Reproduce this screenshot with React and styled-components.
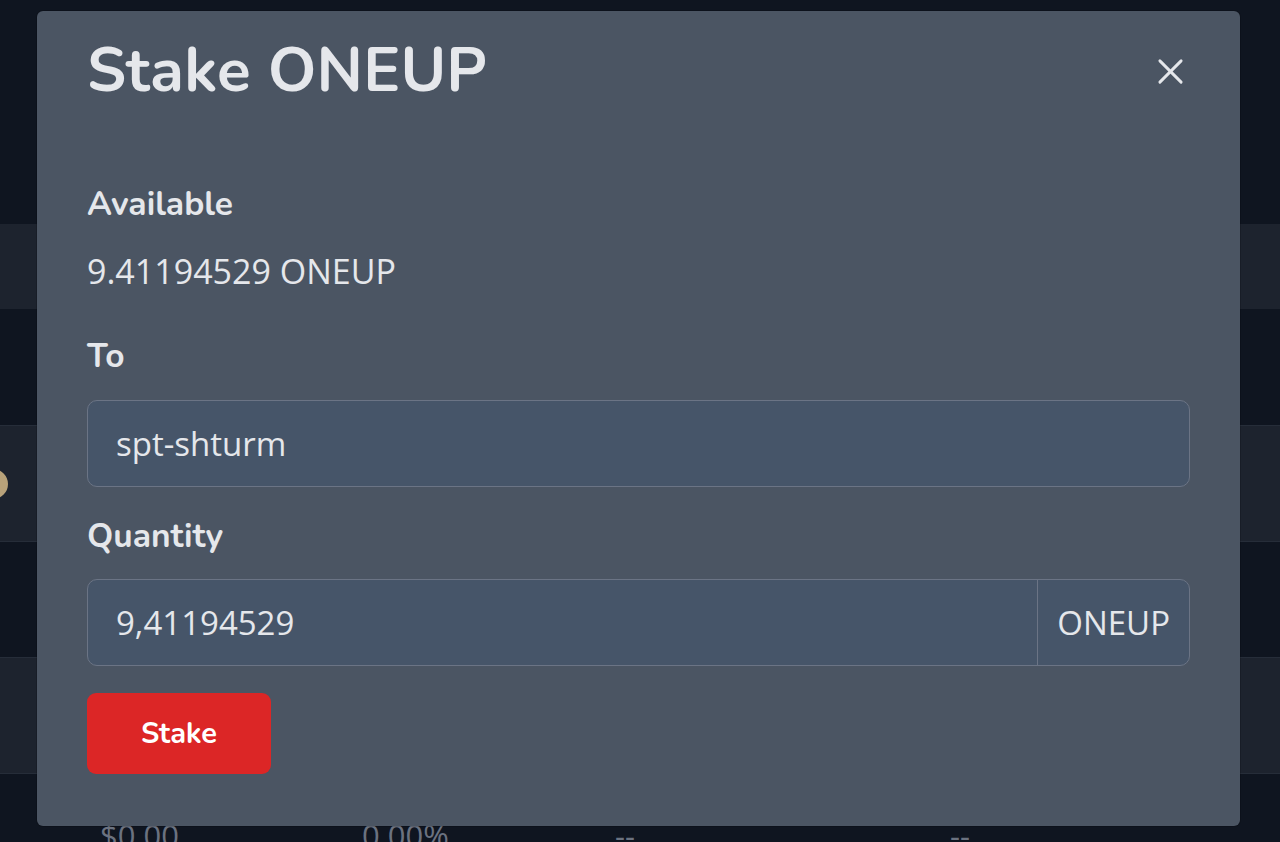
import React from 'react';
import styled, { createGlobalStyle } from 'styled-components';

const GlobalStyle = createGlobalStyle`
  html, body {
    margin: 0;
    padding: 0;
    background: #0f1520;
    overflow: hidden;
  }
  * {
    box-sizing: border-box;
  }
`;

const Page = styled.div`
  position: relative;
  width: 1280px;
  height: 842px;
  overflow: hidden;
  background: #0f1520;
  font-family: 'Open Sans', 'Liberation Sans', sans-serif;
`;

const TopArea = styled.div`
  height: 224px;
  background: #0f1520;
`;

const TableRow = styled.div`
  display: flex;
  align-items: ${(p) => (p.$top ? 'flex-start' : 'flex-end')};
  height: ${(p) => p.$height || 116}px;
  padding-top: ${(p) => p.$padTop || 0}px;
  background: ${(p) => (p.$light ? '#1d232e' : '#0f1520')};
  border-top: 1px solid ${(p) => (p.$line ? '#262d39' : 'transparent')};
`;

const Cell = styled.div`
  width: ${(p) => p.$width}px;
  padding-left: ${(p) => p.$pad || 0}px;
  color: #6b7280;
  font-size: 31px;
  line-height: 1;
  white-space: nowrap;
`;

const Avatar = styled.div`
  width: 30px;
  height: 30px;
  margin-left: -22px;
  margin-bottom: 42px;
  border-radius: 50%;
  background: #b8a27a;
`;

const Overlay = styled.div`
  position: absolute;
  inset: 0;
  padding: 11px 40px 0 37px;
`;

const Modal = styled.div`
  width: 1203px;
  height: 815px;
  background: #4b5563;
  border-radius: 6px;
  box-shadow: 0 0 0 1px rgba(0, 0, 0, 0.15);
  padding: 30px 50px 0 50px;
  display: flex;
  flex-direction: column;
`;

const Header = styled.div`
  display: flex;
  align-items: center;
  justify-content: space-between;
  height: 60px;
  margin-bottom: 84px;
`;

const Title = styled.h1`
  margin: 0;
  font-family: 'Nunito', 'Lato', sans-serif;
  font-weight: 700;
  font-size: 62px;
  line-height: 1;
  color: #e5e7eb;
  letter-spacing: 0.2px;
`;

const CloseButton = styled.button`
  display: flex;
  align-items: center;
  justify-content: center;
  width: 40px;
  height: 40px;
  padding: 0;
  border: none;
  background: transparent;
  color: #e5e7eb;
  cursor: pointer;
`;

const Label = styled.div`
  font-family: 'Nunito', 'Lato', sans-serif;
  font-weight: 700;
  font-size: 33.5px;
  line-height: 38px;
  color: #e5e7eb;
  margin-bottom: ${(p) => p.$gap || 0}px;
`;

const Value = styled.div`
  font-size: 34px;
  line-height: 38px;
  color: #e5e7eb;
  margin-bottom: 47px;
`;

const InputGroup = styled.div`
  display: flex;
  height: 87px;
  border: 1px solid #6b7485;
  border-radius: 10px;
  background: #465569;
  overflow: hidden;
  margin-bottom: ${(p) => p.$gap || 0}px;
`;

const Input = styled.input`
  flex: 1;
  min-width: 0;
  border: none;
  outline: none;
  background: transparent;
  padding: 0 28px;
  font-family: 'Open Sans', 'Liberation Sans', sans-serif;
  font-size: 33px;
  color: #e5e7eb;
`;

const Addon = styled.div`
  display: flex;
  align-items: center;
  padding: 0 19px;
  border-left: 1px solid #6b7485;
  font-size: 33px;
  color: #e5e7eb;
`;

const StakeButton = styled.button`
  width: 184px;
  height: 81px;
  border: none;
  border-radius: 9px;
  background: #dc2626;
  color: #ffffff;
  font-family: 'Nunito', 'Lato', sans-serif;
  font-weight: 700;
  font-size: 29px;
  cursor: pointer;
`;

function XIcon() {
  return (
    <svg width="27" height="27" viewBox="0 0 28 28" fill="none" stroke="currentColor" strokeWidth="3" strokeLinecap="round">
      <line x1="3" y1="3" x2="25" y2="25" />
      <line x1="25" y1="3" x2="3" y2="25" />
    </svg>
  );
}

export default function App() {
  return (
    <>
      <GlobalStyle />
      <Page>
        <TopArea />
        <TableRow $light $height={85} />
        <TableRow />
        <TableRow $light $line>
          <Avatar />
        </TableRow>
        <TableRow $line />
        <TableRow $light $line />
        <TableRow $line $top $padTop={46} $height={80}>
          <Cell $width={362} $pad={100}>$0.00</Cell>
          <Cell $width={253}>0.00%</Cell>
          <Cell $width={335}>--</Cell>
          <Cell $width={200}>--</Cell>
        </TableRow>

        <Overlay>
          <Modal>
            <Header>
              <Title>Stake ONEUP</Title>
              <CloseButton aria-label="Close">
                <XIcon />
              </CloseButton>
            </Header>

            <Label $gap={29}>Available</Label>
            <Value>9.41194529 ONEUP</Value>

            <Label $gap={25}>To</Label>
            <InputGroup $gap={30}>
              <Input defaultValue="spt-shturm" />
            </InputGroup>

            <Label $gap={24}>Quantity</Label>
            <InputGroup $gap={27}>
              <Input defaultValue="9,41194529" />
              <Addon>ONEUP</Addon>
            </InputGroup>

            <div>
              <StakeButton>Stake</StakeButton>
            </div>
          </Modal>
        </Overlay>
      </Page>
    </>
  );
}
